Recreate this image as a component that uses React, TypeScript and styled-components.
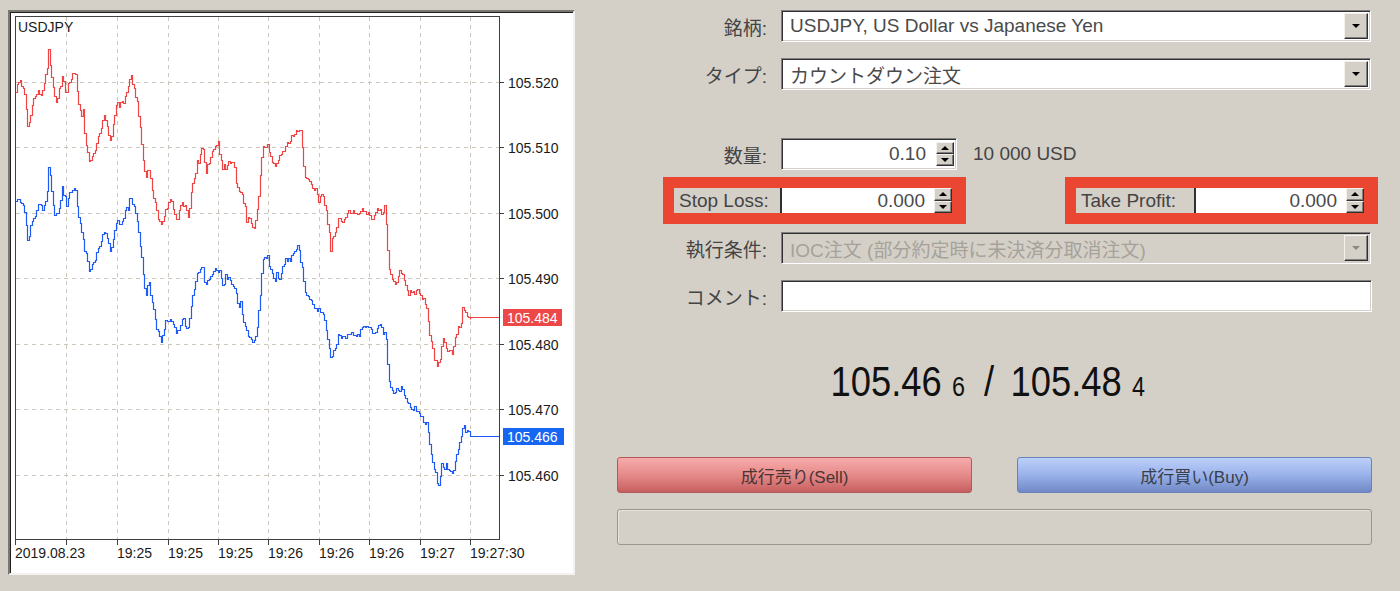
import React from "react";
import styled, { createGlobalStyle } from "styled-components";

const GlobalStyle = createGlobalStyle`
  html, body {
    margin: 0;
    padding: 0;
    background: #d4d0c8;
  }
  body {
    font-family: "Liberation Sans", "Noto Sans CJK JP", sans-serif;
    color: #404040;
  }
`;

// seeded random so the tick chart draws the same way each time
function mulberry32(seed: number) {
  return () => {
    seed = (seed + 0x6d2b79f5) | 0;
    let t = Math.imul(seed ^ (seed >>> 15), 1 | seed);
    t = (t + Math.imul(t ^ (t >>> 7), 61 | t)) ^ t;
    return ((t ^ (t >>> 14)) >>> 0) / 4294967296;
  };
}

// rough shape of the ask line in chart pixels (x, y)
const askShape: [number, number][] = [
  [15, 85], [20, 82], [24, 95], [27, 127], [30, 110], [37, 87], [42, 90],
  [46, 75], [48, 50], [52, 82], [55, 107], [60, 85], [62, 68], [65, 93],
  [68, 75], [75, 75], [78, 100], [83, 123], [88, 157], [93, 147], [100, 127],
  [103, 108], [110, 140], [115, 110], [123, 103], [130, 75], [137, 103],
  [142, 150], [145, 178], [148, 160], [152, 190], [156, 212], [160, 225],
  [165, 205], [170, 200], [176, 218], [182, 200], [188, 215], [192, 180],
  [197, 160], [202, 148], [205, 170], [212, 153], [218, 147], [222, 168],
  [228, 165], [233, 167], [237, 187], [242, 200], [247, 220], [254, 225],
  [258, 195], [262, 145], [267, 143], [273, 165], [280, 158], [285, 145],
  [290, 140], [297, 130], [300, 135], [304, 175], [310, 180], [316, 190],
  [322, 195], [326, 215], [330, 245], [334, 235], [338, 215], [344, 222],
  [350, 212], [358, 215], [366, 210], [372, 215], [380, 210], [385, 218],
  [388, 265], [394, 280], [400, 268], [408, 290], [416, 290], [422, 300],
  [426, 305], [430, 340], [434, 355], [438, 366], [442, 340], [447, 348],
  [452, 354], [456, 335], [460, 322], [463, 305], [466, 314], [470, 317],
];

function baseAt(x: number) {
  for (let i = 1; i < askShape.length; i++) {
    const [x1, y1] = askShape[i];
    const [x0, y0] = askShape[i - 1];
    if (x <= x1) return y0 + ((y1 - y0) * (x - x0)) / (x1 - x0);
  }
  return askShape[askShape.length - 1][1];
}

function tickPath(shift: number, endY: number, seed: number) {
  const rnd = mulberry32(seed);
  let d = "";
  let n = 0;
  for (let x = 15; x < 470; x += 1.5) {
    n = n * 0.55 + (rnd() - 0.5) * 8;
    const spike = rnd() < 0.07 ? (rnd() - 0.5) * 22 : 0;
    const y = Math.round(baseAt(x) + shift + n + spike) + 0.5;
    const px = Math.round(x) + 0.5;
    d += d === "" ? `M${px} ${y}` : `H${px}V${y}`;
  }
  return d + `H470.5V${endY}H499`;
}

const askPath = tickPath(0, 317.5, 7);
const bidPath = tickPath(117, 436.5, 21);

const hGrid = [82, 147, 213, 278, 344, 409, 475];
const hLabels = ["105.520", "105.510", "105.500", "105.490", "105.480", "105.470", "105.460"];
const vGrid = [66, 117, 168, 218, 268, 319, 369, 420, 470];
const timeTicks: [number, string][] = [
  [15, "2019.08.23"], [66, ""], [117, "19:25"], [168, "19:25"], [218, "19:25"],
  [268, "19:26"], [319, "19:26"], [369, "19:26"], [420, "19:27"], [470, "19:27:30"],
];

const axisFont = { fontFamily: "Liberation Sans, sans-serif", fontSize: 14 };

const PriceChart = () => (
  <svg width={563} height={561} viewBox="10 12 563 561">
    {hGrid.map((y) => (
      <line key={y} x1={16} x2={499} y1={y + 0.5} y2={y + 0.5} stroke="#cdc6bb" strokeDasharray="4 4" />
    ))}
    {vGrid.map((x) => (
      <line key={x} x1={x + 0.5} x2={x + 0.5} y1={17} y2={539} stroke="#cdc6bb" strokeDasharray="4 4" />
    ))}
    <rect x={15.5} y={16.5} width={484} height={523} fill="none" stroke="#404040" />

    <path d={askPath} fill="none" stroke="#f04444" strokeWidth={1.2} />
    <path d={bidPath} fill="none" stroke="#1e5af5" strokeWidth={1.2} />

    <text x={18} y={27} dominantBaseline="central" fill="#1a1a1a" {...axisFont}>USDJPY</text>

    {hGrid.map((y, i) => (
      <g key={y}>
        <line x1={499} x2={504} y1={y + 0.5} y2={y + 0.5} stroke="#404040" />
        <text x={508} y={y + 1} dominantBaseline="central" fill="#1a1a1a" {...axisFont}>
          {hLabels[i]}
        </text>
      </g>
    ))}

    <rect x={503} y={309} width={59} height={17} fill="#ec4848" />
    <text x={507} y={318} dominantBaseline="central" fill="#fff" {...axisFont}>105.484</text>
    <rect x={503} y={428} width={61} height={17} fill="#1766f2" />
    <text x={507} y={437} dominantBaseline="central" fill="#fff" {...axisFont}>105.466</text>

    {timeTicks.map(([x, label]) => (
      <g key={x}>
        <line x1={x + 0.5} x2={x + 0.5} y1={539} y2={545} stroke="#404040" />
        {label && (
          <text x={x} y={553} dominantBaseline="central" fill="#1a1a1a" {...axisFont}>
            {label}
          </text>
        )}
      </g>
    ))}
  </svg>
);

const Arrow = ({ dir, dim }: { dir: "up" | "down"; dim?: boolean }) => (
  <ArrowShape $dir={dir} $dim={dim} />
);

const Spinner = ({ height }: { height: number }) => (
  <SpinColumn style={{ height }}>
    <SpinButton>
      <Arrow dir="up" />
    </SpinButton>
    <SpinButton>
      <Arrow dir="down" />
    </SpinButton>
  </SpinColumn>
);

const Combo = ({ text, disabled }: { text: string; disabled?: boolean }) => (
  <ComboBox $disabled={disabled}>
    <ComboText $disabled={disabled}>{text}</ComboText>
    <DropButton>
      <Arrow dir="down" dim={disabled} />
    </DropButton>
  </ComboBox>
);

export default function App() {
  return (
    <>
      <GlobalStyle />
      <Page>
        <ChartFrame>
          <PriceChart />
        </ChartFrame>

        <FormPanel>
          <FieldRow $top={0}>
            <FieldLabel>銘柄:</FieldLabel>
            <Combo text="USDJPY, US Dollar vs Japanese Yen" />
          </FieldRow>
          <FieldRow $top={16}>
            <FieldLabel>タイプ:</FieldLabel>
            <Combo text="カウントダウン注文" />
          </FieldRow>
          <FieldRow $top={48}>
            <FieldLabel>数量:</FieldLabel>
            <SpinBox>
              <SpinValue>0.10</SpinValue>
              <Spinner height={24} />
            </SpinBox>
            <UnitText>10 000 USD</UnitText>
          </FieldRow>

          <HighlightRow>
            <Highlight $width={303}>
              <HighlightLabel $width={106}>Stop Loss:</HighlightLabel>
              <HighlightInput $width={154}>0.000</HighlightInput>
              <Spinner height={25} />
            </Highlight>
            <Highlight $width={313}>
              <HighlightLabel $width={118}>Take Profit:</HighlightLabel>
              <HighlightInput $width={152}>0.000</HighlightInput>
              <Spinner height={25} />
            </Highlight>
          </HighlightRow>

          <FieldRow $top={8}>
            <FieldLabel>執行条件:</FieldLabel>
            <Combo text="IOC注文 (部分約定時に未決済分取消注文)" disabled />
          </FieldRow>
          <FieldRow $top={16}>
            <FieldLabel>コメント:</FieldLabel>
            <TextInput />
          </FieldRow>

          <PriceLine>
            <PriceText>
              105.46<SmallDigit>6</SmallDigit>
              <Slash>/</Slash>
              105.48<SmallDigit>4</SmallDigit>
            </PriceText>
          </PriceLine>

          <ButtonRow>
            <TradeButton $side="sell">成行売り(Sell)</TradeButton>
            <TradeButton $side="buy">成行買い(Buy)</TradeButton>
          </ButtonRow>
          <StatusBox />
        </FormPanel>
      </Page>
    </>
  );
}

const Page = styled.div`
  display: flex;
  align-items: flex-start;
  padding: 10px 0 0 8px;
  width: 1400px;
  height: 591px;
  box-sizing: border-box;
`;

const ChartFrame = styled.div`
  width: 567px;
  height: 565px;
  box-sizing: border-box;
  background: #fff;
  border: 2px solid;
  border-color: #7a7670 #f4f2ee #f4f2ee #7a7670;
  box-shadow: inset 1px 1px 0 #202020;
  svg {
    display: block;
  }
`;

const FormPanel = styled.div`
  margin-left: 42px;
  width: 755px;
  display: flex;
  flex-direction: column;
`;

const FieldRow = styled.div<{ $top: number }>`
  display: flex;
  align-items: center;
  gap: 14px;
  height: 32px;
  margin-top: ${(p) => p.$top}px;
`;

const FieldLabel = styled.div`
  width: 150px;
  flex-shrink: 0;
  text-align: right;
  font-size: 19px;
  color: #444;
`;

const sunken = `
  box-sizing: border-box;
  border: 1px solid;
  border-color: #808080 #fff #fff #808080;
  box-shadow: inset 1px 1px 0 #303030, inset -1px -1px 0 #d4d0c8;
`;

const ComboBox = styled.div<{ $disabled?: boolean }>`
  ${sunken}
  width: 590px;
  height: 32px;
  display: flex;
  align-items: stretch;
  padding: 2px;
  background: ${(p) => (p.$disabled ? "#d4d0c8" : "#fff")};
`;

const ComboText = styled.div<{ $disabled?: boolean }>`
  flex: 1;
  display: flex;
  align-items: center;
  padding-left: 6px;
  font-size: 19px;
  white-space: nowrap;
  color: ${(p) => (p.$disabled ? "#a6a29a" : "#4a4a4a")};
`;

const DropButton = styled.div`
  width: 24px;
  box-sizing: border-box;
  background: #d4d0c8;
  border: 1px solid;
  border-color: #f4f2ee #303030 #303030 #f4f2ee;
  box-shadow: inset -1px -1px 0 #808080;
  display: flex;
  align-items: center;
  justify-content: center;
`;

const ArrowShape = styled.span<{ $dir: "up" | "down"; $dim?: boolean }>`
  width: 0;
  height: 0;
  border-left: 4px solid transparent;
  border-right: 4px solid transparent;
  ${(p) =>
    p.$dir === "down"
      ? `border-top: 4px solid ${p.$dim ? "#8c8880" : "#000"};`
      : `border-bottom: 4px solid ${p.$dim ? "#8c8880" : "#000"};`}
`;

const SpinBox = styled.div`
  ${sunken}
  width: 176px;
  height: 32px;
  background: #fff;
  display: flex;
  align-items: center;
  padding: 0 2px 0 2px;
`;

const SpinValue = styled.div`
  flex: 1;
  text-align: right;
  padding-right: 10px;
  font-size: 19px;
  color: #4a4a4a;
`;

const SpinColumn = styled.div`
  width: 18px;
  flex-shrink: 0;
  display: flex;
  flex-direction: column;
`;

const SpinButton = styled.div`
  flex: 1;
  box-sizing: border-box;
  background: #d4d0c8;
  border: 1px solid;
  border-color: #f4f2ee #303030 #303030 #f4f2ee;
  box-shadow: inset -1px -1px 0 #808080;
  display: flex;
  align-items: center;
  justify-content: center;
`;

const UnitText = styled.div`
  margin-left: 2px;
  font-size: 19px;
  color: #444;
`;

const HighlightRow = styled.div`
  display: flex;
  justify-content: space-between;
  padding-left: 46px;
  margin-right: -6px;
  margin-top: 7px;
`;

const Highlight = styled.div<{ $width: number }>`
  width: ${(p) => p.$width}px;
  height: 47px;
  box-sizing: border-box;
  padding: 11px 13px 11px 11px;
  background: #ea4631;
  display: flex;
  align-items: stretch;
`;

const HighlightLabel = styled.div<{ $width: number }>`
  width: ${(p) => p.$width}px;
  box-sizing: border-box;
  padding-left: 5px;
  background: #d4d0c8;
  font-size: 19px;
  line-height: 25px;
  color: #444;
  white-space: nowrap;
`;

const HighlightInput = styled.div<{ $width: number }>`
  width: ${(p) => p.$width}px;
  box-sizing: border-box;
  background: #fff;
  border-left: 2px solid #303030;
  padding-right: 9px;
  text-align: right;
  font-size: 19px;
  line-height: 25px;
  color: #4a4a4a;
`;

const TextInput = styled.div`
  ${sunken}
  width: 591px;
  height: 32px;
  background: #fff;
`;

const PriceLine = styled.div`
  margin-top: 45px;
  height: 50px;
  line-height: 50px;
  padding-right: 14px;
  text-align: center;
  white-space: nowrap;
  font-family: "Liberation Sans", sans-serif;
  font-size: 42px;
  color: #111;
`;

// the quote font is narrower than Arial, so squeeze it horizontally
const PriceText = styled.span`
  display: inline-block;
  transform: scaleX(0.865);
  transform-origin: center;
`;

const SmallDigit = styled.span`
  font-size: 27px;
  margin-left: 12px;
`;

const Slash = styled.span`
  margin: 0 19px 0 22px;
`;

const ButtonRow = styled.div`
  margin-top: 50px;
  display: grid;
  grid-template-columns: 355px 355px;
  justify-content: space-between;
`;

const TradeButton = styled.button<{ $side: "sell" | "buy" }>`
  height: 36px;
  border-radius: 3px;
  border: 1px solid ${(p) => (p.$side === "sell" ? "#b05a5a" : "#6a82b8")};
  background: ${(p) =>
    p.$side === "sell"
      ? "linear-gradient(#f7abab, #e58a8a 50%, #c85f5f)"
      : "linear-gradient(#bcd0fa, #9ab2ea 50%, #7089c6)"};
  font-family: "Liberation Sans", "Noto Sans CJK JP", sans-serif;
  font-size: 17px;
  color: ${(p) => (p.$side === "sell" ? "#4a3434" : "#38404e")};
  padding: 0;
`;

const StatusBox = styled.div`
  margin-top: 16px;
  height: 36px;
  box-sizing: border-box;
  border: 1px solid #9a968e;
  border-radius: 3px;
  box-shadow: inset 1px 1px 0 #e8e4dc;
`;
